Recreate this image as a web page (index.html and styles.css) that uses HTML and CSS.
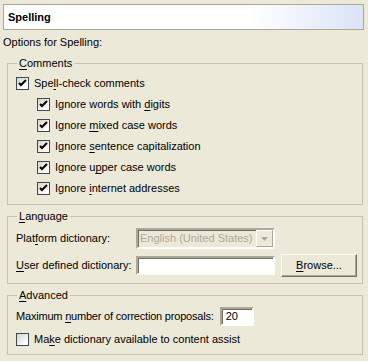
FILE: index.html
```html
<!DOCTYPE html>
<html lang="en">
<head>
  <meta charset="UTF-8">
  <title>Spelling</title>
  <link rel="stylesheet" href="styles.css">
</head>
<body>

  <header class="title">Spelling</header>
  <p class="intro">Options for Spelling:</p>

  <fieldset class="group comments">
    <legend><u>C</u>omments</legend>
    <label class="check"><span class="box checked"></span><span>Spe<u>l</u>l-check comments</span></label>
    <label class="check sub"><span class="box checked"></span><span>Ignore words with <u>d</u>igits</span></label>
    <label class="check sub"><span class="box checked"></span><span>Ignore <u>m</u>ixed case words</span></label>
    <label class="check sub"><span class="box checked"></span><span>Ignore <u>s</u>entence capitalization</span></label>
    <label class="check sub"><span class="box checked"></span><span>Ignore u<u>p</u>per case words</span></label>
    <label class="check sub"><span class="box checked"></span><span>Ignore <u>i</u>nternet addresses</span></label>
  </fieldset>

  <fieldset class="group language">
    <legend><u>L</u>anguage</legend>
    <div class="form">
      <span>Plat<u>f</u>orm dictionary:</span>
      <div class="combo">
        <span class="value">English (United States)</span>
        <span class="arrow">
          <svg width="7" height="4" viewBox="0 0 7 4"><path d="M0 0h7L3.5 4z" fill="#aca899"/></svg>
        </span>
      </div>
      <span></span>

      <span><u>U</u>ser defined dictionary:</span>
      <div class="field"></div>
      <button class="btn"><u>B</u>rowse...</button>
    </div>
  </fieldset>

  <fieldset class="group advanced">
    <legend><u>A</u>dvanced</legend>
    <div class="max">
      <span class="tight">Maximum <u>n</u>umber of correction proposals:</span>
      <div class="field small">20</div>
    </div>
    <label class="check"><span class="box"></span><span>Ma<u>k</u>e dictionary available to content assist</span></label>
  </fieldset>

</body>
</html>
```

FILE: styles.css
```css
body {
  margin: 0;
  background-color: #ece9d8;
  font-family: "Liberation Sans", Arial, sans-serif;
  font-size: 11px;
  line-height: 13px;
  color: #000;
  white-space: nowrap;
}
u {
  text-decoration-thickness: 1px;
  text-underline-offset: 2px;
}

.title {
  height: 24px;
  margin: 4px 4px 0 3px;
  padding-left: 4px;
  border: 1px solid #aca899;
  background: linear-gradient(to right, #fff 68%, #dbe3f8 100%);
  font-weight: bold;
  line-height: 24px;
}
.intro {
  margin: 6px 0 0 3px;
}

.group {
  margin: 8px 5px 0 7px;
  padding: 3px 0 5px 8px;
  border: 1px solid #c5c2b2;
  > legend {
    margin-left: 1px;
    padding: 0 2px;
    line-height: 13px;
  }
  &.language {
    margin-top: 5px;
    padding-top: 5px;
    padding-bottom: 6px;
  }
  &.advanced {
    margin-top: 5px;
    padding-top: 5px;
    padding-bottom: 4px;
  }
}

.check {
  display: flex;
  align-items: center;
  height: 21px;
  &.sub {
    padding-left: 21px;
  }
}
.box {
  flex: none;
  width: 11px;
  height: 11px;
  margin-right: 5px;
  border: 1px solid #3d4a5a;
  background: linear-gradient(135deg, #d4d2c8 0%, #fff 80%);
  &.checked {
    background:
      url("data:image/svg+xml,%3Csvg xmlns='http://www.w3.org/2000/svg' width='11' height='11'%3E%3Cpath d='M2 5l2 2 5-5' fill='none' stroke='%23000' stroke-width='2'/%3E%3C/svg%3E") no-repeat,
      linear-gradient(135deg, #d4d2c8 0%, #fff 80%);
  }
}

.form {
  display: grid;
  grid-template-columns: 120px 139px 82px;
  grid-template-rows: 21px 23px;
  row-gap: 5px;
  align-items: center;
}
.combo {
  display: flex;
  align-items: center;
  justify-content: space-between;
  height: 17px;
  border: 2px solid;
  border-color: #aca899 #fff #fff #aca899;
  box-shadow: inset 1px 1px 0 #716f64;
  .value {
    padding-left: 2px;
    color: #aca899;
  }
  .arrow {
    display: flex;
    align-items: center;
    justify-content: center;
    width: 15px;
    height: 15px;
    border: 1px solid;
    border-color: #fff #aca899 #aca899 #fff;
  }
}
.field {
  height: 15px;
  border: 2px solid;
  border-color: #aca899 #fff #fff #aca899;
  box-shadow: inset 1px 1px 0 #716f64;
  background: #fff;
  &.small {
    width: 26px;
    padding-left: 4px;
    line-height: 15px;
  }
}
.btn {
  width: 76px;
  height: 23px;
  margin-left: 6px;
  padding: 0;
  border: 1px solid;
  border-color: #fff #716f64 #716f64 #fff;
  box-shadow: inset -1px -1px 0 #aca899;
  background: #ece9d8;
  font: inherit;
  color: #000;
}

.max {
  display: flex;
  align-items: center;
  gap: 6px;
  height: 19px;
  margin-bottom: 3px;
  .tight {
    letter-spacing: -0.2px;
  }
}
```
